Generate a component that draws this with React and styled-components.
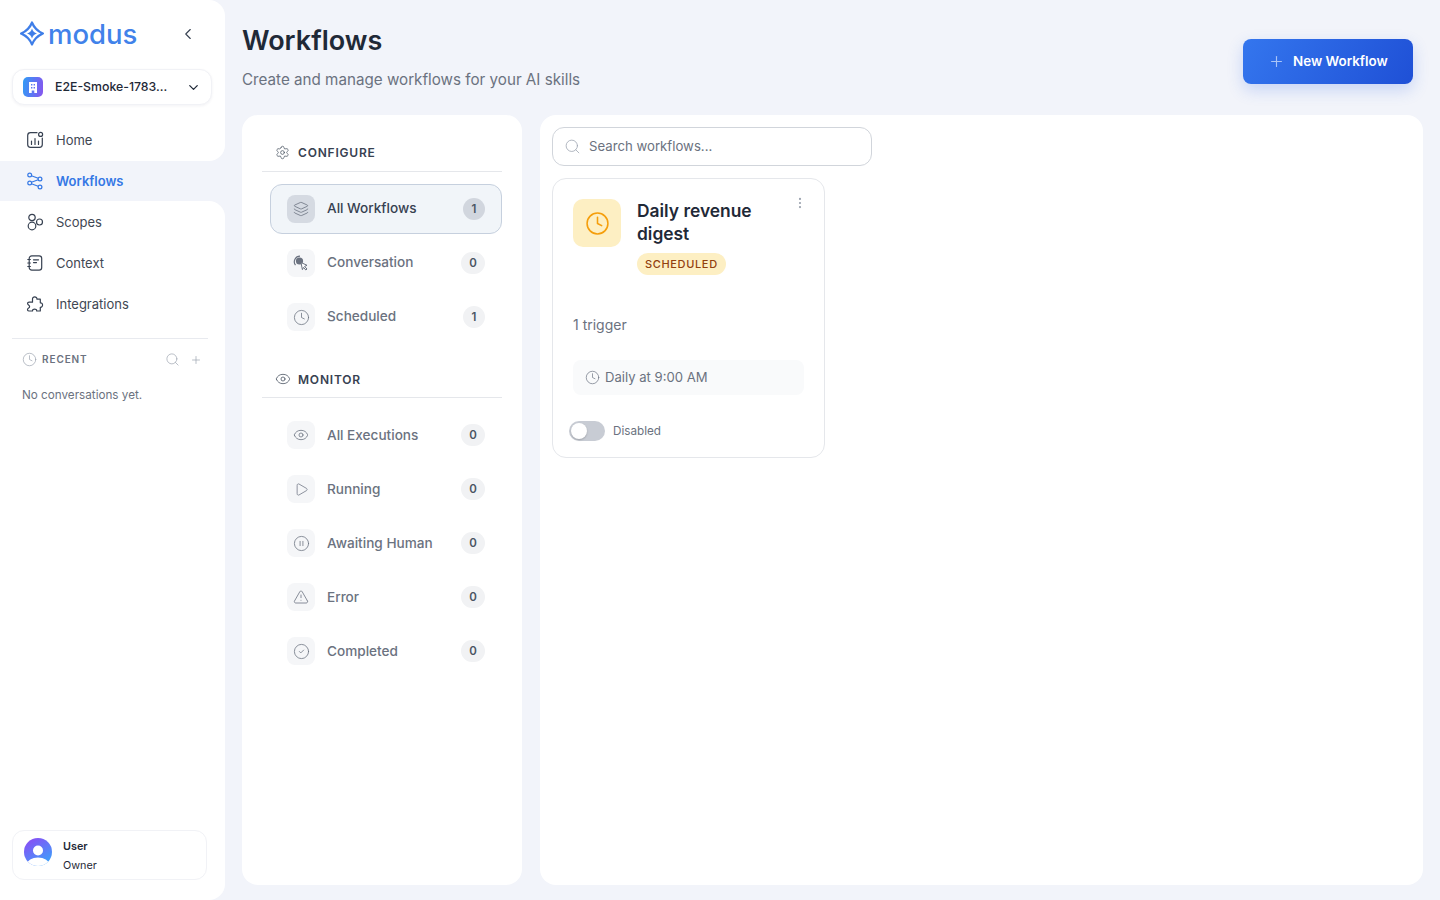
import React from "react";
import styled, { createGlobalStyle } from "styled-components";
import {
  ChevronLeft, ChevronDown, Clock, Search, Plus, Layers, Eye, Play,
  CirclePause, TriangleAlert, CircleCheck, Settings, EllipsisVertical,
} from "lucide-react";

const Global = createGlobalStyle`
  html, body { margin: 0; padding: 0; height: 100%; }
  body { background: #f2f4fa; font-family: Inter, "Liberation Sans", sans-serif; color: #1f2937; -webkit-font-smoothing: antialiased; }
  #root { height: 100%; }
  * { box-sizing: border-box; }
`;

const Shell = styled.div`
  display: flex;
  width: 1440px;
  height: 900px;
  overflow: hidden;
  background: #f2f4fa;
`;
const Sidebar = styled.aside`
  width: 225px;
  flex: none;
  display: flex;
  flex-direction: column;
`;
const SideTop = styled.div`
  height: 161px;
  flex: none;
  background: #fff;
  border-radius: 0 16px 16px 0;
  padding: 0 12px;
`;
const SideBottom = styled.div`
  flex: 1;
  display: flex;
  flex-direction: column;
  background: #fff;
  border-radius: 0 16px 16px 0;
  padding: 0 12px 20px;
`;
const LogoRow = styled.div`
  height: 69px;
  display: flex;
  align-items: center;
  padding: 0 0 2px 8px;
  color: #3f7ee8;
`;
const LogoText = styled.span`
  font-family: Inter, sans-serif;
  font-size: 27.5px;
  font-weight: 500;
  line-height: 1;
  margin: 2px 0 0 4px;
  color: #4182ea;
`;
const CollapseBtn = styled.span`
  display: flex;
  margin-left: auto;
  margin-right: 16px;
  color: #374151;
`;
const WorkspaceSelect = styled.div`
  width: 200px;
  height: 36px;
  display: flex;
  align-items: center;
  padding: 0 10px 0 10px;
  border: 1px solid #f1f2f6;
  border-radius: 12px;
  background: #fff;
  box-shadow: 0 1px 3px rgba(30, 40, 80, 0.06);
  color: #1f2937;
  font-size: 12.3px;
  font-weight: 500;
`;
const WorkspaceIcon = styled.span`
  width: 20px;
  height: 20px;
  flex: none;
  display: flex;
  align-items: center;
  justify-content: center;
  margin-right: 12px;
  border-radius: 5px;
  background: linear-gradient(100deg, #2f9df5 0%, #5f74f3 55%, #8a55ee 100%);
`;
const WorkspaceName = styled.span`
  flex: 1;
  white-space: nowrap;
  padding-bottom: 1px;
`;
const NavItem = styled.div`
  height: ${(p) => (p.$active ? 40 : 41)}px;
  display: flex;
  align-items: center;
  gap: 12px;
  padding-left: ${(p) => (p.$active ? 26 : 14)}px;
  font-size: 13px;
  font-weight: ${(p) => (p.$active ? 600 : 400)};
  color: ${(p) => (p.$active ? "#3578e5" : "#3f4753")};
  flex: none;
`;
const NavStack = styled.div`
  display: flex;
  flex-direction: column;
`;
const TopNav = styled(NavStack)`
  margin-top: 14px;
`;
const SideRule = styled.hr`
  width: 196px;
  height: 1px;
  margin: 14px 0 0;
  border: 0;
  background: #e8eaef;
`;
const RecentHead = styled.div`
  display: flex;
  align-items: center;
  height: 41px;
  padding: 0 11px 0 10px;
  color: #9ca3af;
`;
const RecentLabel = styled.span`
  margin-left: 5px;
  padding-bottom: 2px;
  flex: 1;
  font-size: 10px;
  font-weight: 600;
  letter-spacing: 0.9px;
  color: #6b7280;
`;
const RecentActions = styled.span`
  display: flex;
  align-items: center;
  gap: 10px;
`;
const EmptyNote = styled.div`
  margin: 8px 0 0 10px;
  font-size: 11.7px;
  color: #6b7280;
`;
const UserCard = styled.div`
  width: 195px;
  height: 50px;
  margin-top: auto;
  display: flex;
  align-items: center;
  gap: 11px;
  padding-left: 11px;
  border: 1px solid #f1f2f6;
  border-radius: 12px;
  background: #fff;
`;
const AvatarSlot = styled.span`
  display: flex;
  margin-bottom: 6px;
`;
const UserLines = styled.div`
  display: flex;
  flex-direction: column;
  gap: 7px;
  padding-top: 2px;
  font-size: 10.8px;
  line-height: 12px;
  color: #1f2937;
`;
const UserName = styled.span`
  font-weight: 600;
`;

const Main = styled.main`
  flex: 1;
  min-width: 0;
  display: flex;
  flex-direction: column;
  padding: 0 17px 15px;
`;
const Header = styled.header`
  height: 115px;
  flex: none;
  display: flex;
  align-items: flex-start;
  justify-content: space-between;
`;
const Titles = styled.div`
  padding-top: 23px;
`;
const Title = styled.h1`
  margin: 0;
  font-size: 27px;
  line-height: 36px;
  font-weight: 600;
  color: #1f2937;
`;
const Subtitle = styled.p`
  margin: 10px 0 0;
  font-size: 15.2px;
  line-height: 22px;
  color: #6b7280;
`;
const NewButton = styled.button`
  width: 170px;
  height: 45px;
  margin: 39px 10px 0 0;
  display: flex;
  align-items: center;
  gap: 8px;
  padding: 0 0 1px 25px;
  border: 0;
  border-radius: 8px;
  background: linear-gradient(120deg, #3476ee, #1f50d6);
  box-shadow: 0 6px 16px rgba(47, 100, 230, 0.22);
  color: #fff;
  font-family: inherit;
  font-size: 13.4px;
  font-weight: 600;
  svg { color: #a9c4f7; }
`;
const Panels = styled.div`
  flex: 1;
  min-height: 0;
  display: flex;
  gap: 18px;
`;
const FilterPanel = styled.section`
  width: 280px;
  flex: none;
  background: #fff;
  border-radius: 16px;
  padding: 20px 20px;
`;
const FilterHead = styled.div`
  height: 37px;
  display: flex;
  align-items: center;
  gap: 8px;
  padding: 0 0 2px 13px;
  border-bottom: 1px solid #e5e7eb;
  color: #4b5563;
  font-size: 12px;
  font-weight: 600;
  letter-spacing: 0.8px;
  span { color: #374151; }
`;
const SecondHead = styled(FilterHead)`
  margin-top: 19px;
  padding-bottom: 0;
  gap: 7px;
`;
const FilterList = styled.div`
  display: flex;
  flex-direction: column;
  gap: 4px;
  margin: 12px 0 0 8px;
`;
const FilterItem = styled.div`
  height: 50px;
  display: flex;
  align-items: center;
  padding: 0 16px;
  border: 1px solid ${(p) => (p.$active ? "#c6d0de" : "transparent")};
  border-radius: 12px;
  background: ${(p) => (p.$active ? "#f1f5f9" : "transparent")};
  color: ${(p) => (p.$active ? "#374151" : "#6b7280")};
  font-size: 13.6px;
  font-weight: 500;
`;
const FilterIcon = styled.span`
  width: 28px;
  height: 28px;
  flex: none;
  display: flex;
  align-items: center;
  justify-content: center;
  margin-right: 12px;
  border-radius: 8px;
  background: ${(p) => (p.$active ? "#d5dae2" : "#f5f6f8")};
  color: #6b7280;
`;
const FilterLabel = styled.span`
  flex: 1;
  padding-bottom: ${(p) => (p.$lift ? 2 : 0)}px;
`;
const Count = styled.span`
  width: ${(p) => (p.$count === 0 ? 24 : 22)}px;
  height: 22px;
  flex: none;
  display: flex;
  align-items: center;
  justify-content: center;
  border-radius: 11px;
  background: ${(p) => (p.$active ? "#d1d6de" : "#f1f2f4")};
  color: #4b5563;
  font-size: 11.5px;
  font-weight: 600;
`;
const ContentPanel = styled.section`
  flex: 1;
  min-width: 0;
  background: #fff;
  border-radius: 16px;
  padding: 12px;
`;
const SearchBox = styled.div`
  width: 320px;
  height: 39px;
  display: flex;
  align-items: center;
  gap: 8px;
  padding: 0 0 2px 11px;
  border: 1px solid #d1d5db;
  border-radius: 12px;
  color: #6b7280;
  font-size: 13.2px;
  svg { color: #9ca3af; margin-top: 2px; }
`;
const WorkflowCard = styled.article`
  width: 273px;
  height: 280px;
  margin-top: 12px;
  padding: 20px 20px 0;
  border: 1px solid #e5e7eb;
  border-radius: 14px;
  display: flex;
  flex-direction: column;
`;
const CardTop = styled.div`
  position: relative;
  display: flex;
  gap: 16px;
  flex: none;
`;
const CardIcon = styled.span`
  width: 48px;
  height: 48px;
  flex: none;
  display: flex;
  align-items: center;
  justify-content: center;
  border-radius: 10px;
  background: #fdefc3;
  color: #f59e0b;
`;
const CardHeading = styled.div`
  width: 140px;
`;
const CardTitle = styled.h3`
  margin: 0;
  font-size: 17.4px;
  line-height: 23px;
  font-weight: 600;
  color: #1f2937;
`;
const StatusTag = styled.span`
  display: inline-block;
  margin-top: 8px;
  padding: 0 8px;
  height: 22px;
  line-height: 22px;
  border-radius: 11px;
  background: #fdefc3;
  color: #92400e;
  font-size: 11px;
  font-weight: 500;
  letter-spacing: 0.65px;
`;
const MenuDots = styled.span`
  position: absolute;
  top: -3px;
  right: -3px;
  display: flex;
  color: #9ca3af;
`;
const TriggerText = styled.div`
  margin-top: 40px;
  flex: none;
  font-size: 14px;
  line-height: 20px;
  color: #6b7280;
`;
const ScheduleBar = styled.div`
  height: 35px;
  flex: none;
  margin-top: 25px;
  display: flex;
  align-items: center;
  gap: 5px;
  padding: 0 0 1px 12px;
  border-radius: 8px;
  background: #f9fafb;
  color: #6b7280;
  font-size: 13.1px;
`;
const ToggleRow = styled.div`
  display: flex;
  flex: none;
  align-items: center;
  gap: 8px;
  margin: 26px 0 0 -4px;
  color: #6b7280;
  font-size: 11.7px;
`;
const Toggle = styled.span`
  width: 36px;
  height: 20px;
  padding: 2px;
  border-radius: 10px;
  background: #c8ccd4;
  display: flex;
`;
const Knob = styled.span`
  width: 16px;
  height: 16px;
  border-radius: 50%;
  background: #fff;
  box-shadow: 0 1px 2px rgba(0, 0, 0, 0.2);
`;

const ModusMark = () => (
  <svg width="24" height="25" viewBox="0 0 24 25" fill="none" stroke="#3f7ee8" strokeWidth="2.4" strokeLinejoin="round">
    <path d="M12 1.6 Q15 9 22.8 12.5 Q15 16 12 23.4 Q9 16 1.2 12.5 Q9 9 12 1.6Z" />
    <path d="M12 7.5 Q13 11.5 17 12.5 Q13 13.5 12 17.5 Q11 13.5 7 12.5 Q11 11.5 12 7.5Z" fill="#3f7ee8" stroke="none" />
  </svg>
);
const BuildingGlyph = () => (
  <svg width="12" height="13" viewBox="0 0 12 13" fill="#fff">
    <path fillRule="evenodd" d="M2 1h8v11H7.3V9.5H4.7V12H2ZM4 3v1.6h1.4V3Zm2.6 0v1.6H8V3ZM4 6v1.6h1.4V6Zm2.6 0v1.6H8V6Z" />
  </svg>
);
const HomeIcon = () => (
  <svg width="18" height="18" viewBox="0 0 18 18" fill="none" stroke="#374151" strokeWidth="1.2" strokeLinecap="round">
    <path d="M11 1.7H4.5A2.8 2.8 0 0 0 1.7 4.5v9a2.8 2.8 0 0 0 2.8 2.8h9a2.8 2.8 0 0 0 2.8-2.8V7" />
    <circle cx="14.6" cy="3.4" r="2" />
    <path d="M5.5 10v3.5M9 7.5v6M12.5 10v3.5" />
  </svg>
);
const WorkflowIcon = () => (
  <svg width="18" height="18" viewBox="0 0 18 18" fill="none" stroke="#3578e5" strokeWidth="1.2">
    <circle cx="3.7" cy="3" r="1.9" /><circle cx="3.7" cy="11" r="1.9" />
    <circle cx="14" cy="7" r="1.9" /><circle cx="14" cy="15" r="1.9" />
    <path d="M5.4 3.8 12.2 6.3M5.4 10.2 12.2 7.8M5.4 11.8 12.2 14.2" />
  </svg>
);
const ScopesIcon = () => (
  <svg width="18" height="18" viewBox="0 0 18 18" fill="none" stroke="#374151" strokeWidth="1.2">
    <circle cx="6" cy="4.5" r="3.2" /><circle cx="6" cy="13" r="3.8" /><circle cx="13.5" cy="9" r="3" />
  </svg>
);
const ContextIcon = () => (
  <svg width="18" height="18" viewBox="0 0 18 18" fill="none" stroke="#374151" strokeWidth="1.2" strokeLinecap="round">
    <rect x="3.2" y="1.8" width="12.5" height="14.4" rx="2.6" />
    <path d="M1.8 5.5h2.6M1.8 9h2.6M1.8 12.5h2.6M7.5 5.8h5M7.5 8.6h3" />
  </svg>
);
const PuzzleIcon = () => (
  <svg width="18" height="18" viewBox="0 0 18 18" fill="none" stroke="#374151" strokeWidth="1.2" strokeLinejoin="round">
    <path d="M6.5 4.2c-.3-3 4.7-3 4.5 0h3.3v3.6c3-.3 3 4.8 0 4.6v3.6h-3.6c.2-2.6-4.3-2.6-4.2 0H3c-1.5 0-1.8-1-1.2-2.2.6-1 1.8-.6 1.8-2.2s-2-1.6-2-3c0-1 .5-1.4 1.5-1.4h3.4Z" />
  </svg>
);
const ConversationIcon = () => (
  <svg width="16" height="16" viewBox="0 0 16 16" fill="none" stroke="#6b7280" strokeWidth="1">
    <path d="M7 1.2a5.6 5.6 0 0 0-4.5 9" strokeWidth="1.2" />
    <circle cx="6.5" cy="6" r="3.6" fill="#6b7280" stroke="none" />
    <path d="M8 7.5 14 10.3 11.6 11.4 14 14 12.8 15 10.6 12.4 9.4 14.6Z" fill="#fff" strokeLinejoin="round" />
  </svg>
);
const AvatarIcon = () => (
  <svg width="28" height="28" viewBox="0 0 28 28">
    <defs>
      <linearGradient id="avatarFill" x1="0.2" y1="0" x2="0.8" y2="1">
        <stop offset="0" stopColor="#8a4df5" /><stop offset="1" stopColor="#38a5fb" />
      </linearGradient>
      <clipPath id="avatarClip"><circle cx="14" cy="14" r="14" /></clipPath>
    </defs>
    <circle cx="14" cy="14" r="14" fill="url(#avatarFill)" />
    <g clipPath="url(#avatarClip)" fill="#fff">
      <circle cx="14" cy="12.5" r="5" />
      <ellipse cx="14" cy="26" rx="11" ry="6.5" />
    </g>
  </svg>
);

const configure = [
  { label: "All Workflows", count: 1, icon: <Layers size={16} strokeWidth={1.2} />, active: true },
  { label: "Conversation", count: 0, icon: <ConversationIcon /> },
  { label: "Scheduled", count: 1, icon: <Clock size={17} strokeWidth={1.1} /> },
];
const monitor = [
  { label: "All Executions", count: 0, icon: <Eye size={16} strokeWidth={1.2} /> },
  { label: "Running", count: 0, icon: <Play size={15} strokeWidth={1.2} /> },
  { label: "Awaiting Human", count: 0, icon: <CirclePause size={17} strokeWidth={1.1} /> },
  { label: "Error", count: 0, icon: <TriangleAlert size={16} strokeWidth={1.2} /> },
  { label: "Completed", count: 0, icon: <CircleCheck size={17} strokeWidth={1.1} /> },
];

const Filters = ({ items, lift }) => (
  <FilterList>
    {items.map((it) => (
      <FilterItem key={it.label} $active={it.active}>
        <FilterIcon $active={it.active}>{it.icon}</FilterIcon>
        <FilterLabel $lift={lift}>{it.label}</FilterLabel>
        <Count $active={it.active} $count={it.count}>{it.count}</Count>
      </FilterItem>
    ))}
  </FilterList>
);

export default function App() {
  return (
    <Shell>
      <Global />
      <Sidebar>
        <SideTop>
          <LogoRow>
            <ModusMark />
            <LogoText>modus</LogoText>
            <CollapseBtn><ChevronLeft size={18} strokeWidth={1.5} /></CollapseBtn>
          </LogoRow>
          <WorkspaceSelect>
            <WorkspaceIcon><BuildingGlyph /></WorkspaceIcon>
            <WorkspaceName>E2E-Smoke-1783...</WorkspaceName>
            <ChevronDown size={15} strokeWidth={2} />
          </WorkspaceSelect>
          <TopNav>
            <NavItem><HomeIcon />Home</NavItem>
          </TopNav>
        </SideTop>
        <NavItem $active><WorkflowIcon />Workflows</NavItem>
        <SideBottom>
          <NavStack>
            <NavItem><ScopesIcon />Scopes</NavItem>
            <NavItem><ContextIcon />Context</NavItem>
            <NavItem><PuzzleIcon />Integrations</NavItem>
          </NavStack>
          <SideRule />
          <RecentHead>
            <Clock size={15} strokeWidth={1.1} />
            <RecentLabel>RECENT</RecentLabel>
            <RecentActions>
              <Search size={15} strokeWidth={1.1} />
              <Plus size={12} strokeWidth={1.4} />
            </RecentActions>
          </RecentHead>
          <EmptyNote>No conversations yet.</EmptyNote>
          <UserCard>
            <AvatarSlot><AvatarIcon /></AvatarSlot>
            <UserLines>
              <UserName>User</UserName>
              <span>Owner</span>
            </UserLines>
          </UserCard>
        </SideBottom>
      </Sidebar>
      <Main>
        <Header>
          <Titles>
            <Title>Workflows</Title>
            <Subtitle>Create and manage workflows for your AI skills</Subtitle>
          </Titles>
          <NewButton><Plus size={17} strokeWidth={1.6} />New Workflow</NewButton>
        </Header>
        <Panels>
          <FilterPanel>
            <FilterHead><Settings size={15} strokeWidth={1.2} /><span>CONFIGURE</span></FilterHead>
            <Filters items={configure} lift />
            <SecondHead><Eye size={16} strokeWidth={1.2} /><span>MONITOR</span></SecondHead>
            <Filters items={monitor} />
          </FilterPanel>
          <ContentPanel>
            <SearchBox><Search size={17} strokeWidth={1.1} />Search workflows...</SearchBox>
            <WorkflowCard>
              <CardTop>
                <CardIcon><Clock size={25} strokeWidth={1.5} /></CardIcon>
                <CardHeading>
                  <CardTitle>Daily revenue digest</CardTitle>
                  <StatusTag>SCHEDULED</StatusTag>
                </CardHeading>
                <MenuDots><EllipsisVertical size={14} strokeWidth={1.8} /></MenuDots>
              </CardTop>
              <TriggerText>1 trigger</TriggerText>
              <ScheduleBar><Clock size={15} strokeWidth={1.1} />Daily at 9:00 AM</ScheduleBar>
              <ToggleRow>
                <Toggle><Knob /></Toggle>
                Disabled
              </ToggleRow>
            </WorkflowCard>
          </ContentPanel>
        </Panels>
      </Main>
    </Shell>
  );
}
